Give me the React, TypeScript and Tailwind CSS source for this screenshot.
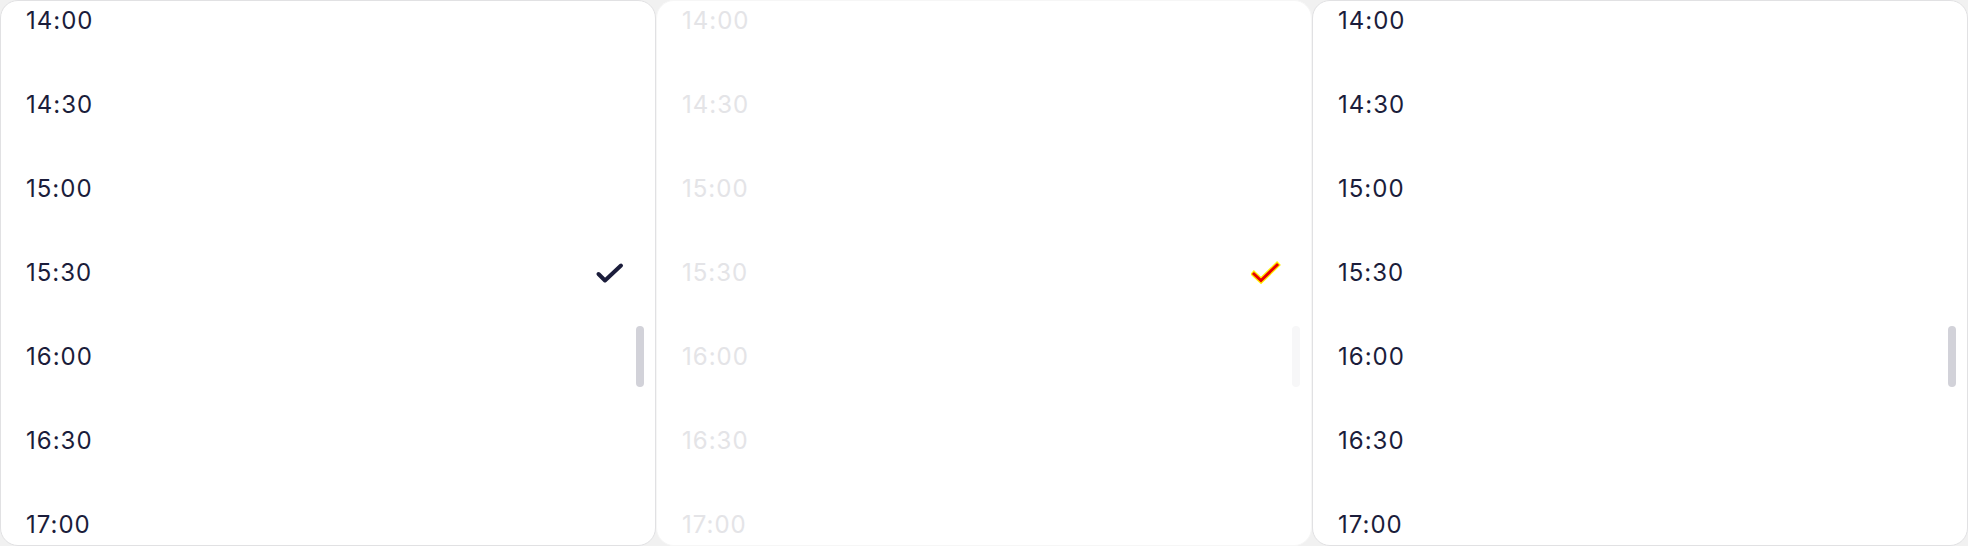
import type { JSX } from 'react';

const times = ['14:00', '14:30', '15:00', '15:30', '16:00', '16:30', '17:00'];

type Variant = 'normal' | 'faded';

function Check({ variant }: { variant: Variant }): JSX.Element {
  if (variant === 'faded') {
    return (
      <svg width="30" height="24" viewBox="0 0 30 24" fill="none">
        <path d="M3 13 L10 19.5 L26 4" stroke="#ffee00" strokeWidth="5.5" strokeLinecap="square" />
        <path d="M3 13 L10 19.5 L26 4" stroke="#e80000" strokeWidth="3" strokeLinecap="square" />
      </svg>
    );
  }
  return (
    <svg width="30" height="24" viewBox="0 0 30 24" fill="none">
      <path
        d="M3.5 13 L10 19.5 L26 4.5"
        stroke="#1b1d3b"
        strokeWidth="4"
        strokeLinecap="round"
        strokeLinejoin="round"
      />
    </svg>
  );
}

function TimeList({ variant, selected }: { variant: Variant; selected?: string }): JSX.Element {
  const faded = variant === 'faded';
  return (
    <div
      className={
        'relative h-[546px] w-[656px] shrink-0 overflow-hidden rounded-[18px] border bg-white ' +
        (faded ? 'border-[#f6f6f6]' : 'border-[#e1e1e3]')
      }
    >
      <div className="-mt-[22px]">
        {times.map((t) => (
          <div key={t} className="flex h-[84px] items-center justify-between pl-[25px] pr-[30px]">
            <span
              className={
                'text-[24px] tracking-[1px] ' + (faded ? 'text-[#e4e4e7]' : 'text-[#1b1d3b]')
              }
            >
              {t}
            </span>
            {t === selected && <Check variant={variant} />}
          </div>
        ))}
      </div>
      <div
        className={
          'absolute right-[11px] top-[325px] h-[61px] w-[8px] rounded-full ' +
          (faded ? 'bg-[#f7f7f8]' : 'bg-[#d2d2d9]')
        }
      />
    </div>
  );
}

export default function App(): JSX.Element {
  return (
    <div className="flex h-[546px] w-[1968px] bg-[#f1f1f1] font-['Inter','Noto_Sans',sans-serif]">
      <TimeList variant="normal" selected="15:30" />
      <TimeList variant="faded" selected="15:30" />
      <TimeList variant="normal" />
    </div>
  );
}
